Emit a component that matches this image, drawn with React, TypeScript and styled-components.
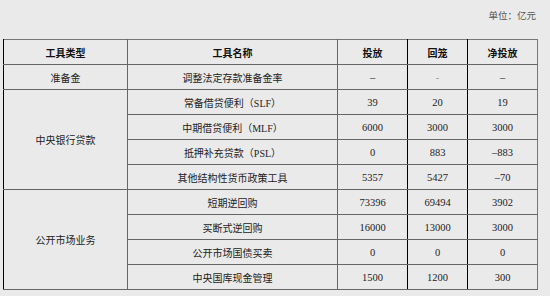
import styled, { createGlobalStyle } from 'styled-components';

const GlobalStyle = createGlobalStyle`
  html, body {
    margin: 0;
    padding: 0;
    background: #eaeaea;
  }
  body {
    font-family: "Liberation Serif", "Noto Sans CJK SC", serif;
    color: #222;
  }
`;

type Row = {
  type?: string;
  span?: number;
  name: string;
  out: string;
  back: string;
  net: string;
};

const rows: Row[] = [
  { type: '准备金', span: 1, name: '调整法定存款准备金率', out: '–', back: '-', net: '–' },
  { type: '中央银行贷款', span: 4, name: '常备借贷便利（SLF）', out: '39', back: '20', net: '19' },
  { name: '中期借贷便利（MLF）', out: '6000', back: '3000', net: '3000' },
  { name: '抵押补充贷款（PSL）', out: '0', back: '883', net: '–883' },
  { name: '其他结构性货币政策工具', out: '5357', back: '5427', net: '–70' },
  { type: '公开市场业务', span: 4, name: '短期逆回购', out: '73396', back: '69494', net: '3902' },
  { name: '买断式逆回购', out: '16000', back: '13000', net: '3000' },
  { name: '公开市场国债买卖', out: '0', back: '0', net: '0' },
  { name: '中央国库现金管理', out: '1500', back: '1200', net: '300' },
];

function App() {
  return (
    <Page>
      <GlobalStyle />
      <Unit>单位：亿元</Unit>
      <Table>
        <colgroup>
          <col style={{ width: 124 }} />
          <col style={{ width: 210 }} />
          <col style={{ width: 70 }} />
          <col style={{ width: 60 }} />
          <col style={{ width: 70 }} />
        </colgroup>
        <thead>
          <tr>
            <Head $first>工具类型</Head>
            <Head>工具名称</Head>
            <Head>投放</Head>
            <Head $dark>回笼</Head>
            <Head $dark>净投放</Head>
          </tr>
        </thead>
        <tbody>
          {rows.map((r, i) => (
            <tr key={i}>
              {r.type && (
                <Cell $first rowSpan={r.span}>
                  {r.type}
                </Cell>
              )}
              <Cell>{r.name}</Cell>
              <Num>{r.out}</Num>
              <Num $dark $muted={r.back === '-'}>{r.back}</Num>
              <Num $dark>{r.net}</Num>
            </tr>
          ))}
        </tbody>
      </Table>
    </Page>
  );
}

export default App;

const Page = styled.div`
  width: 535px;
  padding: 8px 0 0 3px;
`;

const Unit = styled.div`
  text-align: right;
  font-family: "Noto Sans CJK SC", sans-serif;
  font-size: 9.5px;
  line-height: 14px;
  height: 31px;
  color: #555;
  padding-right: 2px;
`;

const Table = styled.table`
  width: 535px;
  table-layout: fixed;
  border-collapse: collapse;
  border-top: 1px solid #777;
  border-right: 1px solid #777;
  border-bottom: 1px solid #444;
`;

const Head = styled.th<{ $first?: boolean; $dark?: boolean }>`
  height: 24px;
  padding: 0;
  font-family: "Noto Sans CJK SC", sans-serif;
  font-size: 10px;
  font-weight: 700;
  text-align: center;
  color: #111;
  border-bottom: 1px solid #666;
  border-left: ${(p) => (p.$first || p.$dark ? '1px solid #000' : '1px solid #666')};
`;

const Cell = styled.td<{ $first?: boolean }>`
  height: 24px;
  padding: 0;
  font-family: "Liberation Serif", "Noto Sans CJK SC", serif;
  font-size: 10px;
  text-align: center;
  color: #222;
  border-bottom: 1px solid #666;
  border-left: ${(p) => (p.$first ? '1px solid #000' : '1px solid #666')};
`;

const Num = styled.td<{ $dark?: boolean; $muted?: boolean }>`
  height: 24px;
  padding: 0;
  font-family: "Liberation Serif", serif;
  font-size: 10.5px;
  text-align: center;
  color: ${(p) => (p.$muted ? '#999' : '#222')};
  border-bottom: 1px solid #666;
  border-left: ${(p) => (p.$dark ? '1px solid #000' : '1px solid #666')};
`;
